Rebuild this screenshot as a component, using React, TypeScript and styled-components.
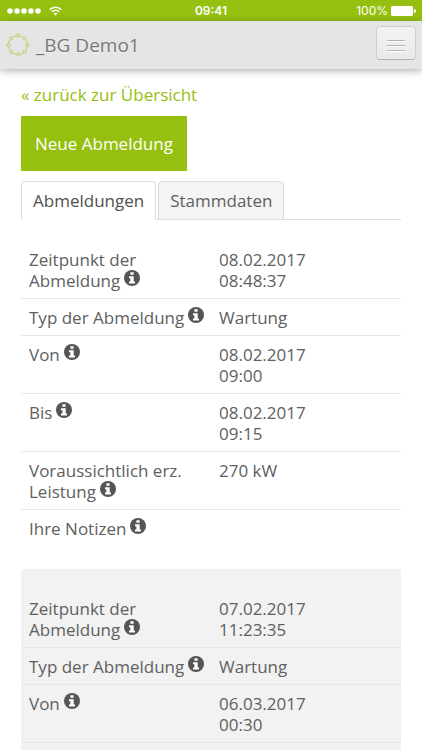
import React from "react";
import styled, { createGlobalStyle } from "styled-components";

const green = "#95c00f";
const grey = "#606060";

const GlobalStyle = createGlobalStyle`
  * { box-sizing: border-box; }
  body {
    margin: 0;
    background: #fff;
    color: ${grey};
    font-family: "Open Sans", "Noto Sans", sans-serif;
    font-size: 17px;
    line-height: 21px;
  }
`;

const Page = styled.div`
  height: 100vh;
  overflow: hidden;
`;

const StatusBar = styled.div`
  display: grid;
  grid-template-columns: 1fr auto 1fr;
  align-items: center;
  height: 21px;
  padding: 0 6px;
  background: ${green};
  color: #fff;
  font-family: Inter, sans-serif;
  font-size: 12px;
`;

const StatusGroup = styled.div<{ $end?: boolean }>`
  display: flex;
  align-items: center;
  justify-content: ${(p) => (p.$end ? "flex-end" : "flex-start")};
  gap: ${(p) => (p.$end ? "3px" : "7px")};
`;

const Clock = styled.span`
  font-weight: 600;
`;

const Header = styled.header`
  display: flex;
  align-items: center;
  gap: 6px;
  height: 48px;
  padding: 0 6px;
  background: #e5e5e5;
  box-shadow: 0 2px 8px rgba(0, 0, 0, 0.3);
`;

const Title = styled.h1`
  flex: 1;
  margin: 0;
  font-size: 19px;
  font-weight: 400;
  line-height: 24px;
  color: #777;
  text-shadow: 0 1px 0 #f4f4f4;
`;

const MenuButton = styled.button`
  display: flex;
  align-items: center;
  justify-content: center;
  width: 40px;
  height: 34px;
  margin-bottom: 5px;
  padding: 6px 0 0;
  border: 1px solid #cfcfcf;
  border-bottom-color: #b0b0b0;
  border-radius: 4px;
  background: linear-gradient(#f3f3f3, #e9e9e9);
`;

const Main = styled.main`
  display: flex;
  flex-direction: column;
  align-items: flex-start;
  padding: 15px 21px 0;
`;

const BackLink = styled.a`
  color: ${green};
  text-decoration: none;
`;

const NewButton = styled.button`
  height: 55px;
  margin: 11px 0 10px;
  padding: 0 14px;
  border: 0;
  background: ${green};
  color: #fff;
  font: inherit;
`;

const Tabs = styled.div`
  display: flex;
  gap: 2px;
  align-self: stretch;
  border-bottom: 1px solid #ddd;
`;

const Tab = styled.button<{ $active?: boolean }>`
  height: 39px;
  margin-bottom: -1px;
  padding: 0 11px;
  border: 1px solid #ddd;
  border-bottom-color: ${(p) => (p.$active ? "#fff" : "#ddd")};
  border-radius: 4px 4px 0 0;
  background: ${(p) => (p.$active ? "#fff" : "#f4f4f4")};
  color: ${(p) => (p.$active ? "#505050" : grey)};
  font: inherit;
`;

const Entry = styled.section<{ $shaded?: boolean }>`
  align-self: stretch;
  padding: 21px 0 23px;
  background: ${(p) => (p.$shaded ? "#f2f2f2" : "#fff")};
`;

const Table = styled.table`
  width: 100%;
  table-layout: fixed;
  border-collapse: separate;
  border-spacing: 0;
`;

const Row = styled.tr`
  &:not(:last-child) > * {
    border-bottom: 1px solid #e7e7e7;
  }
`;

const Label = styled.th`
  padding: 8px 0 7px 8px;
  font-weight: 400;
  text-align: left;
  vertical-align: top;
`;

const Value = styled.td`
  padding: 8px 80px 7px 8px;
  vertical-align: top;
`;

const NoWrap = styled.span`
  white-space: nowrap;
`;

const InfoSvg = styled.svg`
  display: inline-block;
  margin-left: 4px;
  vertical-align: 1px;
`;

const Info = () => (
  <InfoSvg width="16" height="16" viewBox="0 0 16 16" aria-hidden="true">
    <circle cx="8" cy="8" r="8" fill="#555" />
    <path d="M6.4 2.2h3.2v2.6H6.4zM5 6.2h4.7v5.2H11v2H5v-2h1.4V8.2H5z" fill="#fff" />
  </InfoSvg>
);

const Ring = () => {
  const nodes = Array.from({ length: 8 }, (_, i) => {
    const a = (i * Math.PI) / 4;
    return [12 + 9.5 * Math.cos(a), 12 + 9.5 * Math.sin(a)];
  });
  return (
    <svg width="24" height="24" viewBox="0 0 24 24" fill="none" stroke="#b5cf59" aria-hidden="true">
      <circle cx="12" cy="12" r="9.5" strokeWidth="0.9" />
      {nodes.map(([x, y], i) => (
        <circle key={i} cx={x} cy={y} r="1.6" strokeWidth="0.9" fill="#e5e5e5" />
      ))}
    </svg>
  );
};

type Field = { label: string; value: string[] };

const entries: Field[][] = [
  [
    { label: "Zeitpunkt der Abmeldung", value: ["08.02.2017", "08:48:37"] },
    { label: "Typ der Abmeldung", value: ["Wartung"] },
    { label: "Von", value: ["08.02.2017", "09:00"] },
    { label: "Bis", value: ["08.02.2017", "09:15"] },
    { label: "Voraussichtlich erz. Leistung", value: ["270 kW"] },
    { label: "Ihre Notizen", value: [] },
  ],
  [
    { label: "Zeitpunkt der Abmeldung", value: ["07.02.2017", "11:23:35"] },
    { label: "Typ der Abmeldung", value: ["Wartung"] },
    { label: "Von", value: ["06.03.2017", "00:30"] },
    { label: "", value: [] },
  ],
];

const FieldRow = ({ label, value }: Field) => {
  const words = label.split(" ");
  const last = words.pop();
  return (
    <Row>
      <Label scope="row">
        {words.join(" ")}{" "}
        {last && (
          <NoWrap>
            {last}
            <Info />
          </NoWrap>
        )}
      </Label>
      <Value>{value.join(" ")}</Value>
    </Row>
  );
};

export default function App() {
  return (
    <Page>
      <GlobalStyle />
      <StatusBar>
        <StatusGroup>
          <svg width="36" height="8" viewBox="0 0 36 8" fill="#fff" aria-hidden="true">
            {[0, 1, 2, 3, 4].map((i) => (
              <circle key={i} cx={4 + i * 7} cy="4" r="2.8" />
            ))}
          </svg>
          <svg width="13" height="10" viewBox="0 0 13 10" fill="none" stroke="#fff" strokeWidth="1.6" aria-hidden="true">
            <path d="M.8 3.6a8.1 8.1 0 0 1 11.4 0M2.8 5.8a5.2 5.2 0 0 1 7.4 0" />
            <path d="M6.5 9.6 4.6 7.6a2.7 2.7 0 0 1 3.8 0z" fill="#fff" stroke="none" />
          </svg>
        </StatusGroup>
        <Clock>09:41</Clock>
        <StatusGroup $end>
          <span>100%</span>
          <svg width="25" height="10" viewBox="0 0 25 10" fill="#fff" aria-hidden="true">
            <rect width="22" height="10" rx="1.5" />
            <path d="M23 3a2 2 0 0 1 0 4z" />
          </svg>
        </StatusGroup>
      </StatusBar>
      <Header>
        <Ring />
        <Title>_BG Demo1</Title>
        <MenuButton type="button" aria-label="Menü">
          <svg width="20" height="14" viewBox="0 0 20 14" aria-hidden="true">
            <path d="M1 2.5h18M1 7.5h18M1 12.5h18" stroke="#fff" />
            <path d="M1 1.5h18M1 6.5h18M1 11.5h18" stroke="#b4b4b4" />
          </svg>
        </MenuButton>
      </Header>
      <Main>
        <BackLink href="#">« zurück zur Übersicht</BackLink>
        <NewButton type="button">Neue Abmeldung</NewButton>
        <Tabs role="tablist">
          <Tab type="button" role="tab" aria-selected="true" $active>
            Abmeldungen
          </Tab>
          <Tab type="button" role="tab" aria-selected="false">
            Stammdaten
          </Tab>
        </Tabs>
        {entries.map((fields, i) => (
          <Entry key={i} $shaded={i % 2 === 1}>
            <Table>
              <tbody>
                {fields.map((f, j) => (
                  <FieldRow key={j} {...f} />
                ))}
              </tbody>
            </Table>
          </Entry>
        ))}
      </Main>
    </Page>
  );
}
